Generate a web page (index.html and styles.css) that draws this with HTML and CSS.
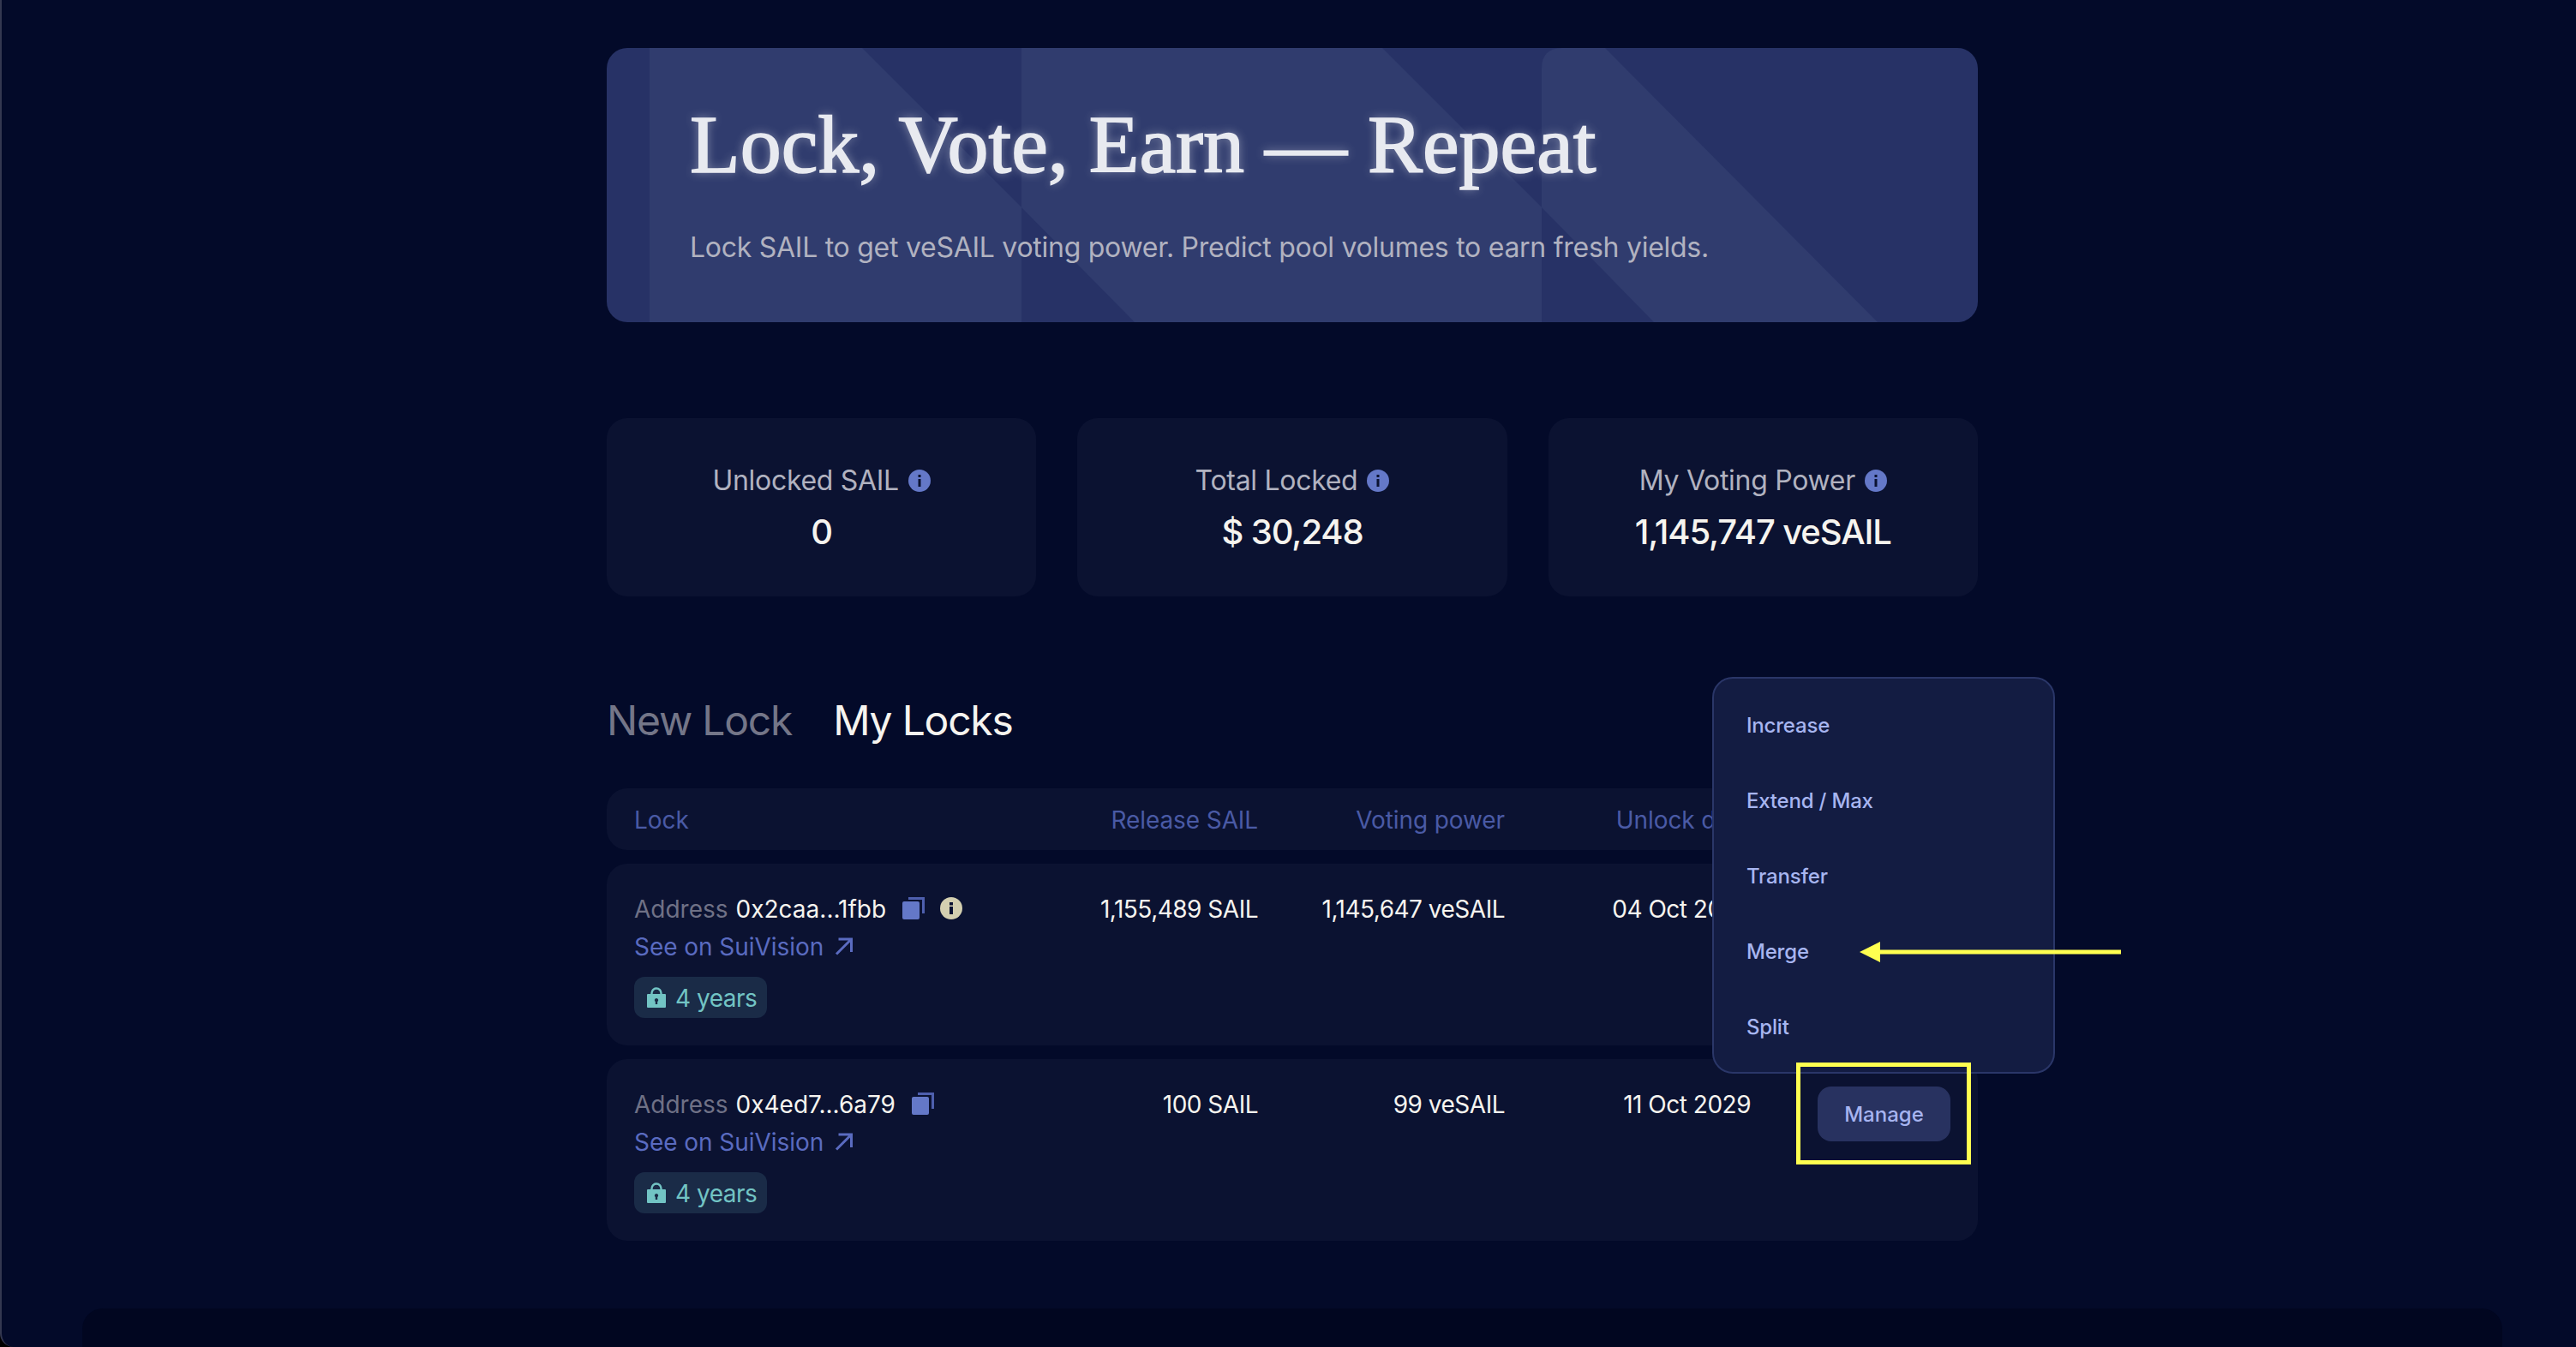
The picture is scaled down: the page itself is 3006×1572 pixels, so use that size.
FILE: index.html

```html
<!DOCTYPE html>
<html>
<head>
    <title>Lock, Vote, Earn</title>
    <link rel="stylesheet" href="styles.css">
</head>
<body>
    <div class="window">
        <main class="page">
            <section class="hero">
                <svg class="hero-bg" viewBox="0 0 1600 320" preserveAspectRatio="none">
                    <path class="band" d="M50 0H298L484 186V320H50Z"/>
                    <path class="band" d="M484 0H905L1091 186V320H616L484 186Z"/>
                    <path class="band" d="M1091 24Q1091 0 1115 0H1165L1483 320H1222L1091 186Z"/>
                </svg>
                <h1>Lock, Vote, Earn — Repeat</h1>
                <p>Lock SAIL to get veSAIL voting power. Predict pool volumes to earn fresh yields.</p>
            </section>

            <section class="stats">
                <div class="stat">
                    <div class="stat-label">Unlocked SAIL
                        <svg class="info" viewBox="0 0 26 26"><circle cx="13" cy="13" r="13"/><rect class="dot" x="11.5" y="11" width="3" height="9"/><rect class="dot" x="11.5" y="6" width="3" height="3"/></svg>
                    </div>
                    <div class="stat-value">0</div>
                </div>
                <div class="stat">
                    <div class="stat-label">Total Locked
                        <svg class="info" viewBox="0 0 26 26"><circle cx="13" cy="13" r="13"/><rect class="dot" x="11.5" y="11" width="3" height="9"/><rect class="dot" x="11.5" y="6" width="3" height="3"/></svg>
                    </div>
                    <div class="stat-value">$ 30,248</div>
                </div>
                <div class="stat">
                    <div class="stat-label">My Voting Power
                        <svg class="info" viewBox="0 0 26 26"><circle cx="13" cy="13" r="13"/><rect class="dot" x="11.5" y="11" width="3" height="9"/><rect class="dot" x="11.5" y="6" width="3" height="3"/></svg>
                    </div>
                    <div class="stat-value">1,145,747 veSAIL</div>
                </div>
            </section>

            <div class="tabs">
                <span class="tab">New Lock</span>
                <span class="tab active">My Locks</span>
            </div>

            <div class="locks">
                <div class="lock-grid lock-head">
                    <div>Lock</div>
                    <div class="num">Release SAIL</div>
                    <div class="num">Voting power</div>
                    <div class="num">Unlock date</div>
                    <div></div>
                </div>

                <div class="lock-grid lock-row">
                    <div class="lock-info">
                        <div class="addr">
                            <span class="addr-label">Address</span>
                            <span class="addr-value">0x2caa...1fbb</span>
                            <svg class="copy" viewBox="0 0 26 26"><path class="copy-back" d="M7 1.500H24.500V19"/><rect x="0" y="5" width="20" height="21" rx="2"/></svg>
                            <svg class="warn" viewBox="0 0 26 26"><circle cx="13" cy="13" r="13"/><rect class="warn-dot" x="11" y="11" width="4" height="9"/><rect class="warn-dot" x="11" y="6" width="4" height="3.5"/></svg>
                        </div>
                        <a class="vision">See on SuiVision
                            <svg viewBox="0 0 21 21"><path d="M2 19.500L19 2.500M4.500 2H19.500V17"/></svg>
                        </a>
                        <span class="badge">
                            <svg viewBox="0 0 22 24"><path class="shackle" d="M5.500 10V7a5.500 5.500 0 0 1 11 0V10"/><path fill-rule="evenodd" d="M1 8H21a1 1 0 0 1 1 1V23a1 1 0 0 1-1 1H1a1 1 0 0 1-1-1V9a1 1 0 0 1 1-1ZM11 13a2.200 2.200 0 0 0-1.200 4V20h2.400V17a2.200 2.200 0 0 0-1.200-4Z"/></svg>
                            <span class="badge-text">4 years</span>
                        </span>
                    </div>
                    <div class="num">1,155,489 SAIL</div>
                    <div class="num">1,145,647 veSAIL</div>
                    <div class="num">04 Oct 2029</div>
                    <div class="action"><button class="manage">Manage</button></div>
                </div>

                <div class="lock-grid lock-row">
                    <div class="lock-info">
                        <div class="addr">
                            <span class="addr-label">Address</span>
                            <span class="addr-value">0x4ed7...6a79</span>
                            <svg class="copy" viewBox="0 0 26 26"><path class="copy-back" d="M7 1.500H24.500V19"/><rect x="0" y="5" width="20" height="21" rx="2"/></svg>
                        </div>
                        <a class="vision">See on SuiVision
                            <svg viewBox="0 0 21 21"><path d="M2 19.500L19 2.500M4.500 2H19.500V17"/></svg>
                        </a>
                        <span class="badge">
                            <svg viewBox="0 0 22 24"><path class="shackle" d="M5.500 10V7a5.500 5.500 0 0 1 11 0V10"/><path fill-rule="evenodd" d="M1 8H21a1 1 0 0 1 1 1V23a1 1 0 0 1-1 1H1a1 1 0 0 1-1-1V9a1 1 0 0 1 1-1ZM11 13a2.200 2.200 0 0 0-1.200 4V20h2.400V17a2.200 2.200 0 0 0-1.200-4Z"/></svg>
                            <span class="badge-text">4 years</span>
                        </span>
                    </div>
                    <div class="num">100 SAIL</div>
                    <div class="num">99 veSAIL</div>
                    <div class="num">11 Oct 2029</div>
                    <div class="action"><button class="manage">Manage</button></div>
                </div>
            </div>
        </main>

        <div class="footer-panel"></div>

        <!-- dropdown and the annotations lie over the table -->
        <div class="menu">
            <div class="menu-item">Increase</div>
            <div class="menu-item">Extend / Max</div>
            <div class="menu-item">Transfer</div>
            <div class="menu-item">Merge</div>
            <div class="menu-item">Split</div>
        </div>
        <div class="mark-box"></div>
        <svg class="mark-arrow" viewBox="0 0 305 24"><path d="M0 12L24 0V9.500H305V14.500H24V24Z"/></svg>
    </div>
</body>
</html>
```

FILE: styles.css

```css
* {
    box-sizing: border-box;
}
html, body {
    margin: 0;
    height: 100%;
    background: #000;
    overflow: hidden;
}
body {
    font-family: Inter, "Liberation Sans", sans-serif;
    color: #f6f4ef;
}
.window {
    position: relative;
    width: 3006px;
    height: 1572px;
    overflow: hidden;
    background: #030a29;
    border-left: 2px solid #343850;
    border-radius: 0 0 0 16px;
}
.page {
    width: 1600px;
    margin-left: 706px;
    padding-top: 56px;
}

/* hero */
.hero {
    position: relative;
    height: 320px;
    padding: 0 97px;
    border-radius: 24px;
    background: #273266;
    overflow: hidden;
}
.hero-bg {
    position: absolute;
    left: 0;
    top: 0;
    width: 100%;
    height: 100%;
}
.band {
    fill: #303c6e;
}
.hero h1 {
    position: relative;
    margin: 0;
    padding-top: 57px;
    font-family: "Liberation Serif", serif;
    font-size: 96px;
    line-height: 112px;
    font-weight: 400;
    color: #e8eaf0;
    -webkit-text-stroke: 1.6px #e8eaf0;
    text-shadow: 0 0 12px rgba(255, 255, 255, 0.45);
}
.hero p {
    position: relative;
    margin: 44px 0 0;
    font-size: 32px;
    line-height: 40px;
    letter-spacing: -0.27px;
    color: #b1b2c0;
}

/* stats */
.stats {
    display: grid;
    grid-template-columns: repeat(3, 1fr);
    gap: 48px;
    margin-top: 112px;
}
.stat {
    height: 208px;
    padding-top: 53px;
    text-align: center;
    background: #0b1231;
    border-radius: 24px;
}
.stat-label {
    display: flex;
    justify-content: center;
    align-items: center;
    gap: 11px;
    font-size: 32px;
    line-height: 40px;
    letter-spacing: -0.3px;
    color: #b1b2c0;
}
.stat-value {
    margin-top: 16px;
    font-size: 40px;
    line-height: 48px;
    font-weight: 500;
    letter-spacing: -1.1px;
}
.info {
    width: 26px;
    height: 26px;
    fill: #6478c8;
}
.info .dot {
    fill: #0b1231;
}

/* tabs */
.tabs {
    display: flex;
    gap: 48px;
    height: 64px;
    margin-top: 112px;
    margin-bottom: 48px;
    align-items: center;
    padding-top: 2px;
}
.tab {
    font-size: 48px;
    line-height: 62px;
    letter-spacing: -1.2px;
    color: #747688;
}
.tab.active {
    color: #f6f4ef;
}

/* table */
.locks {
    display: flex;
    flex-direction: column;
    gap: 16px;
}
.lock-grid {
    display: grid;
    grid-template-columns: 440px 288px 288px 287px 233px;
    padding: 0 32px;
    background: #0b1231;
    border-radius: 24px;
    font-size: 28px;
}
.num {
    text-align: right;
    white-space: nowrap;
    letter-spacing: -0.5px;
}
.lock-head {
    height: 72px;
    align-items: center;
    padding-top: 2px;
    color: #4a5aa5;
}
.lock-head .num {
    letter-spacing: -0.1px;
}
.lock-row {
    height: 212px;
    padding-top: 32px;
    padding-bottom: 32px;
    line-height: 40px;
}
.lock-row .num {
    padding-top: 1px;
}
.lock-info {
    display: flex;
    flex-direction: column;
    gap: 4px;
    align-items: flex-start;
}
.addr {
    display: flex;
    align-items: center;
    height: 40px;
    padding-top: 1px;
    white-space: nowrap;
}
.addr-label {
    color: #6f7186;
    margin-right: 9px;
}
.copy {
    width: 26px;
    height: 26px;
    margin-left: 19px;
    margin-top: -1px;
    fill: #6478c8;
}
.copy-back {
    fill: none;
    stroke: #4e5fae;
    stroke-width: 3;
}
.warn {
    width: 26px;
    height: 26px;
    margin-left: 18px;
    margin-top: -1px;
    fill: #d4cfb0;
}
.warn-dot {
    fill: #0b1231;
}
.vision {
    display: flex;
    align-items: center;
    gap: 13px;
    height: 40px;
    padding-top: 1px;
    letter-spacing: -0.05px;
    color: #5a6bc0;
}
.vision svg {
    width: 21px;
    height: 21px;
    fill: none;
    stroke: #5a6bc0;
    stroke-width: 3;
}
.badge {
    display: flex;
    align-items: center;
    gap: 11px;
    height: 48px;
    margin-top: 12px;
    padding: 0 12px 0 15px;
    background: #1a2b47;
    border-radius: 12px;
    letter-spacing: -0.5px;
    color: #72c4c4;
}
.badge-text {
    padding-top: 2px;
}
.badge svg {
    width: 22px;
    height: 24px;
    fill: #72c4c4;
}
.shackle {
    fill: none;
    stroke: #72c4c4;
    stroke-width: 2.4;
}
.action {
    display: flex;
    justify-content: flex-end;
}
.manage {
    width: 155px;
    height: 64px;
    border: none;
    border-radius: 16px;
    background: #283260;
    color: #a6b4f0;
    font-family: Inter, "Liberation Sans", sans-serif;
    font-size: 24px;
    font-weight: 500;
}

/* footer strip, cut by the bottom of the window */
.footer-panel {
    width: 2824px;
    height: 200px;
    margin: 79px 0 0 94px;
    background: #010620;
    border-radius: 24px;
}

/* dropdown */
.menu {
    position: absolute;
    left: 1996px;
    top: 790px;
    width: 400px;
    height: 463px;
    padding: 11px 0;
    background: #131c42;
    border: 2px solid #2a3668;
    border-radius: 24px;
}
.menu-item {
    height: 88px;
    padding-left: 38px;
    font-size: 24px;
    line-height: 88px;
    font-weight: 500;
    letter-spacing: -0.2px;
    color: #a7b5f0;
}

/* annotations */
.mark-box {
    position: absolute;
    left: 2094px;
    top: 1240px;
    width: 204px;
    height: 119px;
    border: 5px solid #ffff50;
}
.mark-arrow {
    position: absolute;
    left: 2168px;
    top: 1099px;
    width: 305px;
    height: 24px;
    fill: #ffff50;
}
```
